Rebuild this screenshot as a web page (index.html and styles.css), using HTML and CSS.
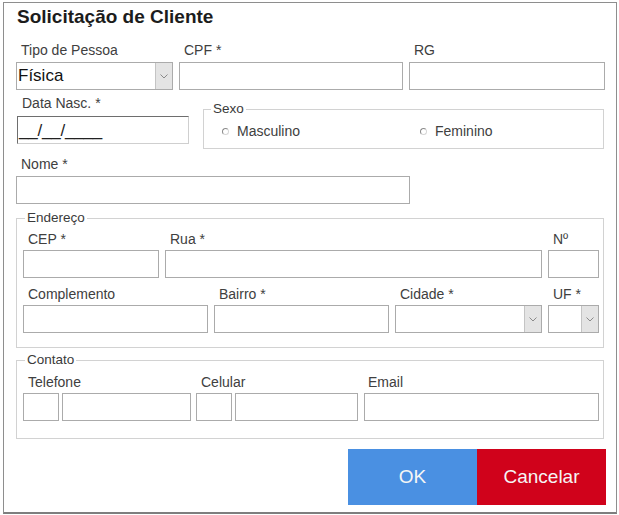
FILE: index.html
```html
<!DOCTYPE html>
<html lang="pt-BR">
<head>
<meta charset="utf-8">
<title>Solicitação de Cliente</title>
<link rel="stylesheet" href="styles.css">
</head>
<body>
<div class="dialog">
  <h1 class="title">Solicitação de Cliente</h1>

  <div class="row row1">
    <div class="field w-tipo">
      <label>Tipo de Pessoa</label>
      <div class="input select">
        <span class="select-value">Física</span>
        <span class="select-btn"><svg width="8" height="5" viewBox="0 0 8 5"><polyline points="0.5,0.5 4,4 7.5,0.5" fill="none" stroke="#8a8a8a" stroke-width="1"/></svg></span>
      </div>
    </div>
    <div class="field w-cpf">
      <label>CPF *</label>
      <div class="input"></div>
    </div>
    <div class="field w-rg">
      <label>RG</label>
      <div class="input"></div>
    </div>
  </div>

  <div class="row row2">
    <div class="field w-data">
      <label class="lbl-data">Data Nasc. *</label>
      <div class="input date">__/__/____</div>
    </div>
    <fieldset class="group sexo">
      <legend>Sexo</legend>
      <div class="radios">
        <span class="radio"><span class="dot"></span>Masculino</span>
        <span class="radio"><span class="dot"></span>Feminino</span>
      </div>
    </fieldset>
  </div>

  <div class="row row3">
    <div class="field w-nome">
      <label>Nome *</label>
      <div class="input"></div>
    </div>
  </div>

  <fieldset class="group endereco">
    <legend>Endereço</legend>
    <div class="row grow1">
      <div class="field w-cep"><label>CEP *</label><div class="input"></div></div>
      <div class="field w-rua"><label>Rua *</label><div class="input"></div></div>
      <div class="field w-num"><label>Nº</label><div class="input"></div></div>
    </div>
    <div class="row grow2">
      <div class="field w-comp"><label>Complemento</label><div class="input"></div></div>
      <div class="field w-bairro"><label>Bairro *</label><div class="input"></div></div>
      <div class="field w-cidade">
        <label>Cidade *</label>
        <div class="input select">
          <span class="select-value"></span>
          <span class="select-btn"><svg width="8" height="5" viewBox="0 0 8 5"><polyline points="0.5,0.5 4,4 7.5,0.5" fill="none" stroke="#8a8a8a" stroke-width="1"/></svg></span>
        </div>
      </div>
      <div class="field w-uf">
        <label>UF *</label>
        <div class="input select">
          <span class="select-value"></span>
          <span class="select-btn"><svg width="8" height="5" viewBox="0 0 8 5"><polyline points="0.5,0.5 4,4 7.5,0.5" fill="none" stroke="#8a8a8a" stroke-width="1"/></svg></span>
        </div>
      </div>
    </div>
  </fieldset>

  <fieldset class="group contato">
    <legend>Contato</legend>
    <div class="row crow">
      <div class="field w-tel">
        <label>Telefone</label>
        <div class="pair">
          <div class="input ddd"></div>
          <div class="input tel-num"></div>
        </div>
      </div>
      <div class="field w-cel">
        <label>Celular</label>
        <div class="pair">
          <div class="input ddd"></div>
          <div class="input cel-num"></div>
        </div>
      </div>
      <div class="field w-email">
        <label class="lbl-email">Email</label>
        <div class="input"></div>
      </div>
    </div>
  </fieldset>

  <div class="footer">
    <button class="btn btn-ok">OK</button>
    <button class="btn btn-cancel">Cancelar</button>
  </div>
</div>
</body>
</html>
```

FILE: styles.css
```css
html, body {
  margin: 0;
  padding: 0;
  background: #ffffff;
}

body {
  font-family: "Liberation Sans", Arial, sans-serif;
  color: #404040;
}

.dialog {
  box-sizing: border-box;
  margin: 2px 0 0 3px;
  width: 614px;
  height: 512px;
  border: 1px solid #8e8e8e;
  border-bottom: 2px solid #7e7e7e;
  padding: 0 11px 0 12px;
  background: #ffffff;
}

.title {
  margin: 3px 0 0 1px;
  font-size: 19px;
  line-height: 22px;
  font-weight: bold;
  color: #1c1c1c;
}

.row {
  display: flex;
  align-items: flex-start;
  gap: 6px;
}

.field {
  display: flex;
  flex-direction: column;
  flex: none;
}

.field label {
  display: block;
  font-size: 14px;
  line-height: 16px;
  color: #404040;
  padding-left: 5px;
  margin-bottom: 4px;
  white-space: nowrap;
}

.input {
  box-sizing: border-box;
  height: 28px;
  border: 1px solid #ababab;
  background: #ffffff;
}

/* Row 1 */
.row1 { margin-top: 14px; }
.w-tipo { width: 157px; }
.w-cpf { width: 224px; }
.w-rg { width: 196px; }

.select {
  display: flex;
  align-items: stretch;
}
.select-value {
  flex: 1;
  display: flex;
  align-items: center;
  padding-left: 1px;
  font-size: 17px;
  color: #111111;
  line-height: 20px;
}
.select-btn {
  width: 16px;
  display: flex;
  align-items: center;
  justify-content: center;
  background: #e4e4e4;
  border-left: 1px solid #c4c4c4;
}

/* Row 2 */
.row2 { margin-top: 5px; gap: 0; }
.w-data { width: 172px; margin-left: 1px; }
.field .lbl-data { margin-bottom: 5px; }
.date {
  border-color: #6e6e6e #cfcfcf #cfcfcf #6e6e6e;
  font-size: 17px;
  line-height: 27px;
  padding-left: 1px;
  color: #222222;
  letter-spacing: -0.2px;
}

.group {
  box-sizing: border-box;
  margin: 0;
  padding: 0;
  border: 1px solid #d2d2d2;
  min-inline-size: 0;
}
.group legend {
  font-size: 13.5px;
  line-height: 16px;
  color: #3a3a3a;
  padding: 0 2px;
  margin-left: 7px;
}

.sexo {
  width: 401px;
  margin: 6px 0 0 14px;
}
.radios {
  display: grid;
  grid-template-columns: 198px 1fr;
  padding: 6px 0 9px 18px;
}
.radio {
  display: flex;
  align-items: center;
  gap: 8px;
  font-size: 14px;
  line-height: 16px;
  color: #404040;
}
.dot {
  box-sizing: border-box;
  width: 7px;
  height: 7px;
  border-radius: 50%;
  border: 1px solid;
  border-color: #8a8a8a #d6d6d6 #d6d6d6 #8a8a8a;
  margin-top: 1px;
}

/* Row 3 */
.row3 { margin-top: 7px; }
.w-nome { width: 394px; }

/* Endereço */
.endereco {
  width: 588px;
  margin-top: 6px;
  padding: 0 4px 14px 6px;
}
.endereco legend,
.contato legend { margin-left: 2px; }
.endereco .field label,
.contato .field label { margin-bottom: 3px; }
.grow1 { margin-top: 5px; }
.grow2 { margin-top: 8px; }
.w-cep { width: 136px; }
.w-rua { width: 377px; }
.w-num { width: 51px; }
.w-comp { width: 185px; }
.w-bairro { width: 175px; }
.w-cidade { width: 147px; }
.w-uf { width: 51px; }

/* Contato */
.contato {
  width: 588px;
  margin-top: 4px;
  padding: 0 4px 17px 6px;
}
.crow { margin-top: 6px; gap: 0; }
.pair { display: flex; gap: 3px; }
.ddd { width: 36px; }
.tel-num { width: 129px; }
.cel-num { width: 123px; }
.w-tel { width: 168px; }
.w-cel { width: 162px; margin-left: 5px; }
.w-email { width: 235px; margin-left: 6px; }
.field .lbl-email { padding-left: 4px; }

/* Footer */
.footer {
  display: flex;
  justify-content: flex-end;
  margin-top: 10px;
  margin-right: -1px;
}
.btn {
  width: 129px;
  height: 56px;
  border: none;
  margin: 0;
  padding: 0;
  font-family: "Liberation Sans", Arial, sans-serif;
  font-size: 19px;
  color: #f5f5f5;
  cursor: pointer;
}
.btn-ok { background: #4a90e2; }
.btn-cancel { background: #d0021b; }
```
